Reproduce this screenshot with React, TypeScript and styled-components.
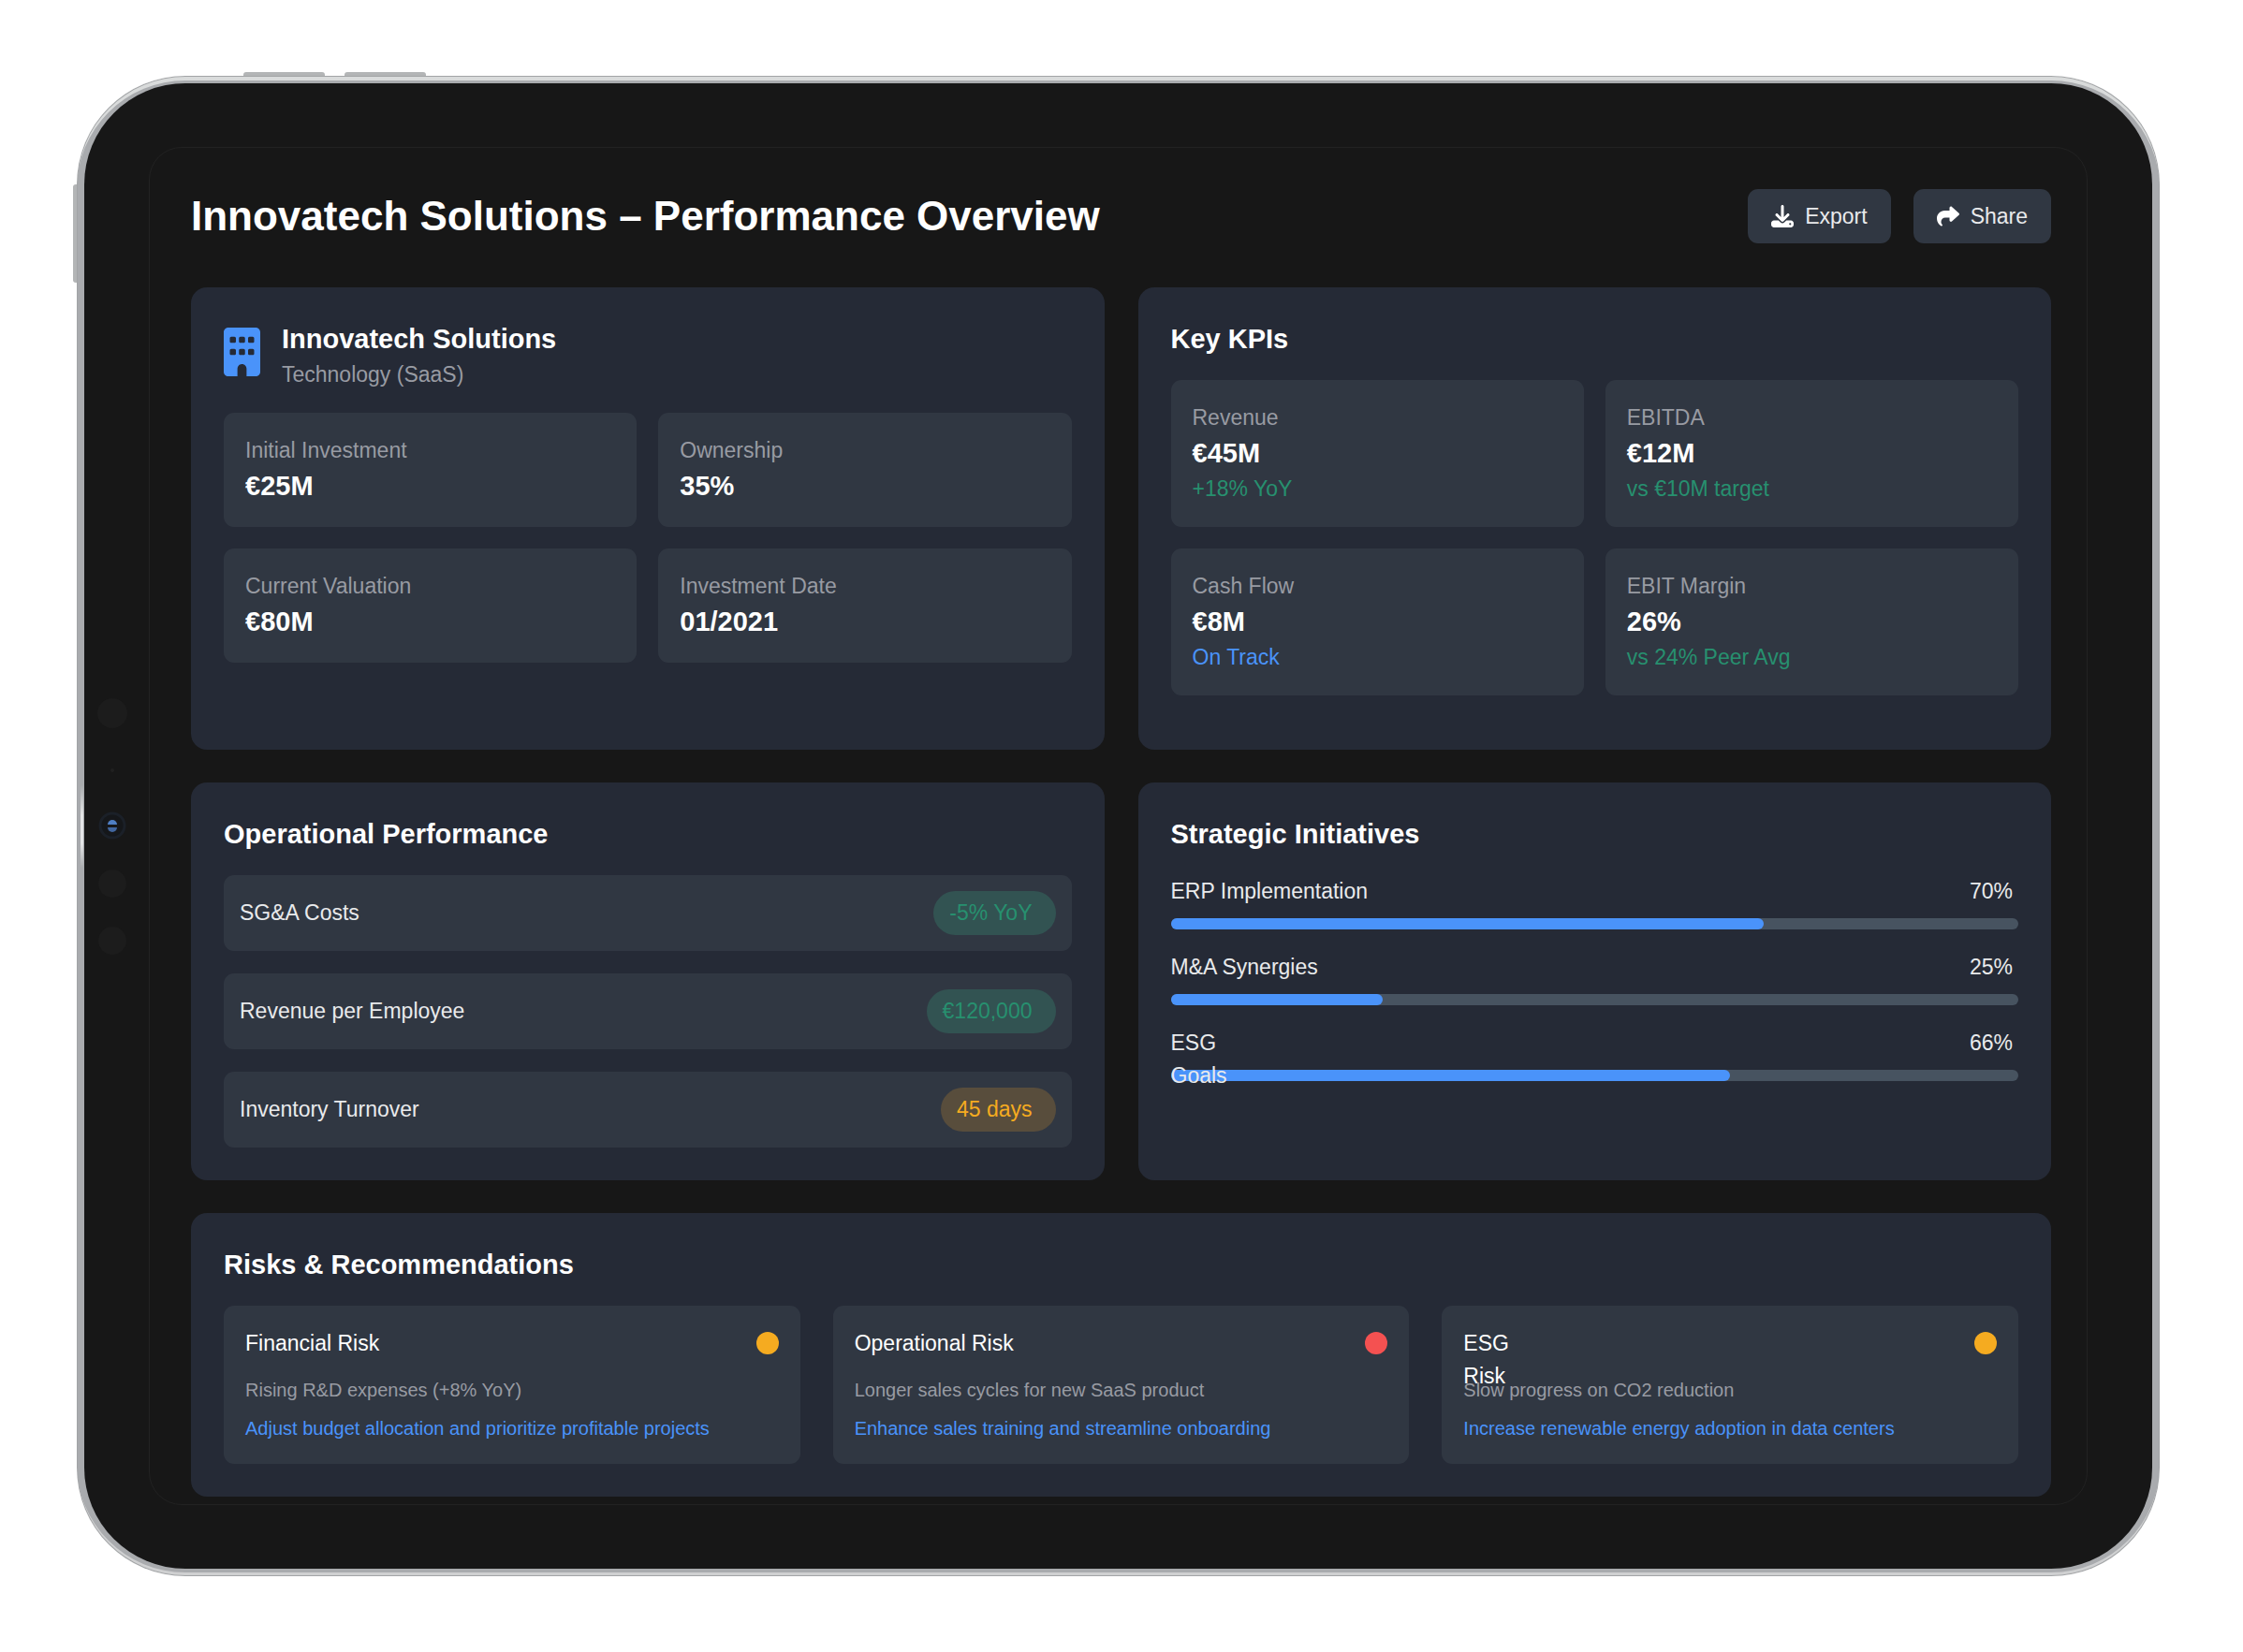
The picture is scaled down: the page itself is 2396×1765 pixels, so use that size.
import React from "react";
import styled, { createGlobalStyle } from "styled-components";
import { FaBuilding, FaDownload, FaShare } from "react-icons/fa6";

const color = {
  page: "#ffffff",
  bezel: "#171717",
  card: "#252a36",
  tile: "#303742",
  track: "#475360",
  text: "#e9eaec",
  strong: "#ffffff",
  muted: "#989ba3",
  blue: "#4a93fa",
  green: "#27906f",
  amber: "#f5ab20",
  red: "#f45151",
};

const toneText = { good: color.green, info: color.blue, warn: color.amber };
const toneFill = { good: "#325352", info: "#34496b", warn: "#584d3c" };
type Tone = keyof typeof toneText;

const GlobalStyle = createGlobalStyle`
  *, *::before, *::after { box-sizing: border-box; }
  body {
    margin: 0;
    background: ${color.page};
    color: ${color.text};
    font-family: "Liberation Sans", Arial, Helvetica, sans-serif;
    font-size: 23px;
    line-height: 35px;
  }
  h1, h2, h3, p, ul, dl, dd { margin: 0; padding: 0; }
  ul { list-style: none; }
`;

const Page = styled.div`
  padding: 81px 89px 81px 82px;
`;

const Device = styled.div`
  position: relative;
  padding: 8px;
  border-radius: 116px;
  background: linear-gradient(to bottom, transparent 758px, #e4e5e6 790px, #e4e5e6 820px, transparent 846px)
      4px 0 / 3px 100% no-repeat,
    #a9abae;
  box-shadow: inset 0 0 0 1px #a2a4a6, inset 0 5px 0 #d9dbdb, inset 0 -4px 0 #cfd0d1;
`;

const SideButton = styled.span<{ $edge: "top" | "left"; $start: number; $length: number }>`
  position: absolute;
  background: #b3b5b6;
  ${(p) =>
    p.$edge === "top"
      ? `top: -4px; left: ${p.$start}px; width: ${p.$length}px; height: 4px; border-radius: 3px 3px 0 0;`
      : `left: -4px; top: ${p.$start}px; height: ${p.$length}px; width: 4px; border-radius: 3px 0 0 3px;`}
`;

const Sensors = styled.svg`
  position: absolute;
  left: 22px;
  top: 50%;
  width: 32px;
  height: 280px;
  margin-top: -141px;
`;

const Bezel = styled.div`
  padding: 68px 69px 68px;
  border-radius: 108px;
  background: ${color.bezel};
`;

const Screen = styled.main`
  padding: 44px 38px 8px 44px;
  border: 1px solid #222222;
  border-radius: 35px;
`;

const Header = styled.header`
  display: flex;
  align-items: center;
  justify-content: space-between;
  margin-bottom: 47px;
`;

const Title = styled.h1`
  color: ${color.strong};
  font-size: 44px;
  line-height: 58px;
`;

const Actions = styled.div`
  display: flex;
  gap: 24px;
`;

const Button = styled.button`
  display: flex;
  align-items: center;
  gap: 12px;
  height: 58px;
  padding: 0 25px;
  border: 0;
  border-radius: 11px;
  background: ${color.tile};
  color: ${color.text};
  font: inherit;
  cursor: pointer;

  svg {
    width: 24px;
    height: 24px;
    color: ${color.strong};
  }
`;

const Dashboard = styled.div`
  display: grid;
  grid-template-columns: repeat(2, minmax(0, 1fr));
  gap: 35px 36px;
`;

const Card = styled.section<{ $wide?: boolean }>`
  grid-column: ${(p) => (p.$wide ? "1 / -1" : "auto")};
  padding: 35px;
  border-radius: 17px;
  background: ${color.card};
`;

const Heading = styled.h2`
  color: ${color.strong};
  font-size: 29px;
  line-height: 41px;
`;

const CardTitle = styled(Heading)`
  margin-bottom: 23px;
`;

const Company = styled.div`
  display: flex;
  align-items: flex-start;
  gap: 23px;
  margin-bottom: 23px;

  svg {
    width: 39px;
    height: 52px;
    margin-top: 8px;
    color: ${color.blue};
  }
`;

const Muted = styled.p`
  color: ${color.muted};
`;

const Tiles = styled.dl`
  display: grid;
  grid-template-columns: repeat(2, minmax(0, 1fr));
  gap: 23px;
  margin-bottom: 23px;
`;

const Tile = styled.div`
  padding: 23px;
  border-radius: 11px;
  background: ${color.tile};
`;

const Label = styled.dt`
  color: ${color.muted};
`;

const Value = styled.dd`
  color: ${color.strong};
  font-size: 29px;
  font-weight: 700;
  line-height: 41px;
`;

const Note = styled.dd<{ $tone: Tone }>`
  color: ${(p) => toneText[p.$tone]};
`;

const Metrics = styled.ul`
  display: grid;
  gap: 24px;
`;

const Metric = styled.li`
  display: flex;
  align-items: center;
  justify-content: space-between;
  padding: 17px;
  border-radius: 11px;
  background: ${color.tile};
`;

const Pill = styled.span<{ $tone: Tone }>`
  padding: 6px 25px 6px 17px;
  border-radius: 24px;
  background: ${(p) => toneFill[p.$tone]};
  color: ${(p) => toneText[p.$tone]};
`;

const Initiative = styled.li`
  & + & {
    margin-top: 23px;
  }
`;

/* Both heads keep the height of one line: a second line runs over what follows. */
const InitiativeHead = styled.div`
  display: flex;
  justify-content: space-between;
  height: 35px;
  margin-bottom: 11px;
  padding-right: 6px;
  white-space: pre-line;
`;

const Track = styled.div`
  height: 12px;
  border-radius: 6px;
  background: ${color.track};
`;

const Fill = styled.div`
  height: 12px;
  border-radius: 6px;
  background: ${color.blue};
`;

const Risks = styled.ul`
  display: grid;
  grid-template-columns: repeat(3, minmax(0, 1fr));
  gap: 35px;
`;

const Risk = styled.li`
  padding: 23px;
  border-radius: 11px;
  background: ${color.tile};
`;

const RiskHead = styled.div`
  display: flex;
  justify-content: space-between;
  height: 35px;
  margin-bottom: 18px;
`;

const RiskName = styled.h3`
  font-size: 23px;
  font-weight: 400;
  white-space: pre-line;
  color: ${color.strong};
`;

const Dot = styled.span<{ $color: string }>`
  width: 24px;
  height: 24px;
  margin-top: 5px;
  border-radius: 50%;
  background: ${(p) => p.$color};
`;

const RiskText = styled.p<{ $color: string }>`
  color: ${(p) => p.$color};
  font-size: 20px;
  line-height: 29px;

  & + & {
    margin-top: 12px;
  }
`;

const facts = [
  { label: "Initial Investment", value: "€25M" },
  { label: "Ownership", value: "35%" },
  { label: "Current Valuation", value: "€80M" },
  { label: "Investment Date", value: "01/2021" },
];

const kpis: { label: string; value: string; note: string; tone: Tone }[] = [
  { label: "Revenue", value: "€45M", note: "+18% YoY", tone: "good" },
  { label: "EBITDA", value: "€12M", note: "vs €10M target", tone: "good" },
  { label: "Cash Flow", value: "€8M", note: "On Track", tone: "info" },
  { label: "EBIT Margin", value: "26%", note: "vs 24% Peer Avg", tone: "good" },
];

const metrics: { label: string; value: string; tone: Tone }[] = [
  { label: "SG&A Costs", value: "-5% YoY", tone: "good" },
  { label: "Revenue per Employee", value: "€120,000", tone: "good" },
  { label: "Inventory Turnover", value: "45 days", tone: "warn" },
];

const initiatives = [
  { name: "ERP Implementation", percent: 70 },
  { name: "M&A Synergies", percent: 25 },
  { name: "ESG\nGoals", percent: 66 },
];

const risks = [
  {
    name: "Financial Risk",
    level: color.amber,
    detail: "Rising R&D expenses (+8% YoY)",
    action: "Adjust budget allocation and prioritize profitable projects",
  },
  {
    name: "Operational Risk",
    level: color.red,
    detail: "Longer sales cycles for new SaaS product",
    action: "Enhance sales training and streamline onboarding",
  },
  {
    name: "ESG\nRisk",
    level: color.amber,
    detail: "Slow progress on CO2 reduction",
    action: "Increase renewable energy adoption in data centers",
  },
];

function FrontSensors() {
  return (
    <Sensors viewBox="0 0 32 280" aria-hidden="true">
      <circle cx="16" cy="20" r="16" fill="#1c1c1c" />
      <circle cx="16" cy="81" r="2" fill="#202020" />
      <circle cx="16" cy="140" r="13" fill="#15171a" stroke="#1b2028" strokeWidth="3" />
      <circle cx="16" cy="140" r="8" fill="#17181b" />
      <path d="M11 139a5 5 0 0 1 10 0z" fill="#4f7fc4" />
      <path d="M11 142a5 5 0 0 0 10 0z" fill="#41669f" />
      <circle cx="16" cy="202" r="15" fill="#1c1c1c" />
      <circle cx="16" cy="263" r="15" fill="#1c1c1c" />
    </Sensors>
  );
}

export default function App() {
  return (
    <>
      <GlobalStyle />
      <Page>
        <Device>
          <SideButton $edge="top" $start={178} $length={87} />
          <SideButton $edge="top" $start={286} $length={87} />
          <SideButton $edge="left" $start={116} $length={105} />
          <Bezel>
            <Screen>
              <Header>
                <Title>Innovatech Solutions – Performance Overview</Title>
                <Actions>
                  <Button type="button">
                    <FaDownload aria-hidden="true" />
                    Export
                  </Button>
                  <Button type="button">
                    <FaShare aria-hidden="true" />
                    Share
                  </Button>
                </Actions>
              </Header>

              <Dashboard>
                <Card>
                  <Company>
                    <FaBuilding aria-hidden="true" />
                    <div>
                      <Heading>Innovatech Solutions</Heading>
                      <Muted>Technology (SaaS)</Muted>
                    </div>
                  </Company>
                  <Tiles>
                    {facts.map((fact) => (
                      <Tile key={fact.label}>
                        <Label>{fact.label}</Label>
                        <Value>{fact.value}</Value>
                      </Tile>
                    ))}
                  </Tiles>
                </Card>

                <Card>
                  <CardTitle>Key KPIs</CardTitle>
                  <Tiles>
                    {kpis.map((kpi) => (
                      <Tile key={kpi.label}>
                        <Label>{kpi.label}</Label>
                        <Value>{kpi.value}</Value>
                        <Note $tone={kpi.tone}>{kpi.note}</Note>
                      </Tile>
                    ))}
                  </Tiles>
                </Card>

                <Card>
                  <CardTitle>Operational Performance</CardTitle>
                  <Metrics>
                    {metrics.map((metric) => (
                      <Metric key={metric.label}>
                        <span>{metric.label}</span>
                        <Pill $tone={metric.tone}>{metric.value}</Pill>
                      </Metric>
                    ))}
                  </Metrics>
                </Card>

                <Card>
                  <CardTitle>Strategic Initiatives</CardTitle>
                  <ul>
                    {initiatives.map((item) => (
                      <Initiative key={item.name}>
                        <InitiativeHead>
                          <span>{item.name}</span>
                          <span>{item.percent}%</span>
                        </InitiativeHead>
                        <Track
                          role="progressbar"
                          aria-label={item.name}
                          aria-valuemin={0}
                          aria-valuemax={100}
                          aria-valuenow={item.percent}
                        >
                          <Fill style={{ width: `${item.percent}%` }} />
                        </Track>
                      </Initiative>
                    ))}
                  </ul>
                </Card>

                <Card $wide>
                  <CardTitle>Risks &amp; Recommendations</CardTitle>
                  <Risks>
                    {risks.map((risk) => (
                      <Risk key={risk.name}>
                        <RiskHead>
                          <RiskName>{risk.name}</RiskName>
                          <Dot $color={risk.level} />
                        </RiskHead>
                        <RiskText $color={color.muted}>{risk.detail}</RiskText>
                        <RiskText $color={color.blue}>{risk.action}</RiskText>
                      </Risk>
                    ))}
                  </Risks>
                </Card>
              </Dashboard>
            </Screen>
          </Bezel>
          <FrontSensors />
        </Device>
      </Page>
    </>
  );
}
